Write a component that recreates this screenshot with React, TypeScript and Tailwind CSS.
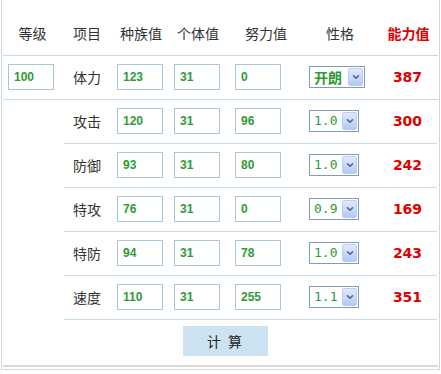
import { ChevronDown } from "lucide-react";

const stats = [
  { name: "体力", base: "123", iv: "31", ev: "0", nature: "开朗", value: "387" },
  { name: "攻击", base: "120", iv: "31", ev: "96", nature: "1.0", value: "300" },
  { name: "防御", base: "93", iv: "31", ev: "80", nature: "1.0", value: "242" },
  { name: "特攻", base: "76", iv: "31", ev: "0", nature: "0.9", value: "169" },
  { name: "特防", base: "94", iv: "31", ev: "78", nature: "1.0", value: "243" },
  { name: "速度", base: "110", iv: "31", ev: "255", nature: "1.1", value: "351" },
];

const cjk = "font-['Noto_Sans_CJK_SC',sans-serif]";

function NumInput({ value, className = "" }: { value: string; className?: string }) {
  return (
    <input
      readOnly
      value={value}
      className={`h-[26px] w-[46px] border border-[#a7c6d6] bg-white pl-[5px] font-['Liberation_Sans',Arial,sans-serif] text-[12px] font-bold text-[#2f9a3a] outline-none ${className}`}
    />
  );
}

function NatureSelect({ value }: { value: string }) {
  const wide = value === "开朗";
  return (
    <div className={`relative ml-[3px] mt-[10px] h-[22px] ${wide ? "w-[56px]" : "w-[50px]"} border border-[#7f9db9] bg-white`}>
      <div
        className={`flex h-full items-center pl-[4px] text-[#2f9a3a] ${
          wide ? `${cjk} text-[14px] font-bold` : "font-['DejaVu_Sans_Mono',monospace] text-[13px]"
        }`}
      >
        {value}
      </div>
      <div className="absolute right-[1px] top-[1px] flex h-[18px] w-[15px] items-center justify-center rounded-[2px] border border-[#b9cdf6] bg-gradient-to-b from-[#e1eafe] to-[#b5c9f4]">
        <ChevronDown size={10} strokeWidth={3.5} className="text-[#4d6185]" />
      </div>
    </div>
  );
}

function StatCells({ s }: { s: (typeof stats)[number] }) {
  return (
    <>
      <div className={`flex h-full w-[46px] items-center justify-center ${cjk} text-[14px] text-[#333]`}>{s.name}</div>
      <div className="h-full w-[60px] pt-[7px]">
        <NumInput value={s.base} className="ml-[7px]" />
      </div>
      <div className="h-full w-[56px] pt-[7px]">
        <NumInput value={s.iv} className="ml-[4px]" />
      </div>
      <div className="h-full w-[80px] pt-[7px]">
        <NumInput value={s.ev} className="ml-[9px]" />
      </div>
      <div className="h-full w-[68px]">
        <NatureSelect value={s.nature} />
      </div>
      <div className="flex h-full w-[63px] items-center justify-center pl-[4px] font-['DejaVu_Sans',Verdana,sans-serif] text-[14px] font-bold text-[#e00000]">
        {s.value}
      </div>
    </>
  );
}

export default function App() {
  return (
    <div className="h-[374px] w-[441px] bg-white">
      <div className="ml-[1px] w-[439px] border-x border-b border-[#c5dce8] px-[1px] pb-[2px]">
        <div className={`flex h-[56px] items-center border-b border-[#c5dce8] pt-[11px] ${cjk} text-[14px] text-[#333]`}>
          <div className="w-[61px] pr-[2px] text-center">等级</div>
          <div className="w-[46px] text-center">项目</div>
          <div className="w-[60px] pl-[2px] text-center">种族值</div>
          <div className="w-[56px] text-center">个体值</div>
          <div className="w-[80px] text-center">努力值</div>
          <div className="w-[68px] text-center">性格</div>
          <div className="w-[63px] pl-[6px] text-center font-bold text-[#e00000]">能力值</div>
        </div>

        <div className="flex h-[44px] border-b border-[#c5dce8]">
          <div className="h-full w-[61px] pt-[7px]">
            <NumInput value="100" className="ml-[5px]" />
          </div>
          <StatCells s={stats[0]} />
        </div>

        <div className="flex">
          <div className="w-[61px]" />
          <div className="flex flex-col">
            {stats.slice(1).map((s) => (
              <div key={s.name} className="flex h-[44px] border-b border-[#c5dce8]">
                <StatCells s={s} />
              </div>
            ))}
          </div>
        </div>

        <div className="pb-[9px] pt-[6px]">
          <button className={`ml-[180px] h-[30px] w-[85px] bg-[#cde3f2] ${cjk} text-[14px] text-[#222] tracking-[2px]`}>计 算</button>
        </div>
        <div className="h-[2px] bg-[#d8d8d8]" />
      </div>
    </div>
  );
}
